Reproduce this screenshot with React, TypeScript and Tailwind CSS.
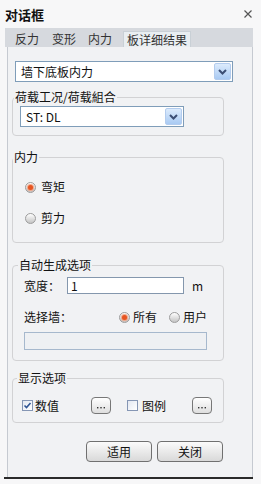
import React from 'react';

const Radio = ({ on }: { on: boolean }) => (
    <span className="w-[11px] h-[11px] rounded-full border border-[#9c9c9c] bg-linear-to-b from-[#ffffff] to-[#c4c4c4] flex items-center justify-center shrink-0">
        {on && <span className="w-[5px] h-[5px] rounded-full bg-[#e65522] shadow-[0_0_1px_1px_#f3a07f]" />}
    </span>
);

const Check = ({ on }: { on: boolean }) => (
    <span className="w-[11px] h-[11px] border border-[#8596b4] bg-linear-to-br from-[#e3e8f1] to-[#ffffff] flex items-center justify-center shrink-0">
        {on && (
            <svg width="9" height="9" viewBox="0 0 9 9">
                <path d="M1.5 4.5 L3.5 6.5 L7.5 2" stroke="#2f5595" strokeWidth="1.6" fill="none" />
            </svg>
        )}
    </span>
);

const DropBtn = () => (
    <span className="w-[17px] h-[17px] mr-[1px] rounded-[2px] border border-[#b3ccee] bg-linear-to-b from-[#dcebfc] to-[#a9caf3] flex items-center justify-center">
        <svg width="9" height="6" viewBox="0 0 9 6">
            <path d="M1 1 L4.5 4.5 L8 1" stroke="#3b4e74" strokeWidth="2" fill="none" />
        </svg>
    </span>
);

// small "..." browse button
const Dots = () => (
    <span className="w-[20px] h-[17px] rounded-[4px] border border-[#777] bg-linear-to-b from-[#ffffff] to-[#dedede] flex items-end justify-center pb-[4px]">
        <svg width="10" height="2" viewBox="0 0 10 2">
            <rect x="1" y="0" width="1.4" height="1.4" fill="#333" />
            <rect x="4.3" y="0" width="1.4" height="1.4" fill="#333" />
            <rect x="7.6" y="0" width="1.4" height="1.4" fill="#333" />
        </svg>
    </span>
);

const App: React.FC = () => {
    return (
        <div className="w-[261px] h-[484px] bg-[#f7f7f8] font-['Noto_Sans_CJK_SC',sans-serif] text-[#111] text-[12px] overflow-hidden">
            <div className="h-[28px] flex items-center justify-between pl-[5px] pr-[9px]">
                <span className="text-[13px] font-bold leading-none">对话框</span>
                <svg width="8" height="8" viewBox="0 0 8 8">
                    <path d="M0.5 0.5 L7.5 7.5 M7.5 0.5 L0.5 7.5" stroke="#555" strokeWidth="1.2" />
                </svg>
            </div>

            <div className="ml-[5px] w-[248px] h-[19px] bg-[#d6d9de] flex items-end pl-[10px] text-[#333] leading-[16px]">
                <span className="h-[16px]">反力</span>
                <span className="h-[16px] ml-[13px]">变形</span>
                <span className="h-[16px] ml-[12px]">内力</span>
                <span className="h-[16px] ml-[11px] px-[3px] bg-[#e9eef1] border-x border-t border-[#c9d0d6]">板详细结果</span>
            </div>

            <div className="ml-[7px] w-[246px] h-[430px] bg-[#f1f2f4] border-x border-[#c6cad1] flex flex-col">
                <div className="ml-[7px] mt-[14px] w-[218px] h-[21px] bg-white border border-[#7f9db9] flex items-center justify-between pl-[5px]">
                    <span className="leading-none">墙下底板内力</span>
                    <DropBtn />
                </div>

                <fieldset className="ml-[4px] mt-[8px] w-[212px] h-[46px] border border-[#d2d2d4] rounded-[4px]">
                    <legend className="ml-[1px] px-[1px] leading-[14px]">荷载工况/荷载組合</legend>
                    <div className="ml-[7px] mt-[2px] w-[164px] h-[21px] bg-white border border-[#7f9db9] flex items-center justify-between pl-[5px]">
                        <span className="leading-none">ST: DL</span>
                        <DropBtn />
                    </div>
                </fieldset>

                <fieldset className="ml-[4px] mt-[14px] w-[212px] h-[93px] border border-[#d2d2d4] rounded-[4px]">
                    <legend className="ml-[0px] px-[1px] leading-[14px]">内力</legend>
                    <div className="ml-[12px] mt-[16px] h-[14px] flex items-center gap-[5px]">
                        <Radio on />
                        <span className="leading-none">弯矩</span>
                    </div>
                    <div className="ml-[12px] mt-[17px] h-[14px] flex items-center gap-[5px]">
                        <Radio on={false} />
                        <span className="leading-none">剪力</span>
                    </div>
                </fieldset>

                <fieldset className="ml-[4px] mt-[15px] w-[212px] h-[103px] border border-[#d2d2d4] rounded-[4px]">
                    <legend className="ml-[5px] px-[1px] leading-[14px]">自动生成选项</legend>
                    <div className="ml-[11px] mt-[5px] h-[17px] flex items-center">
                        <span className="w-[43px] leading-none">宽度：</span>
                        <span className="w-[117px] h-[17px] bg-white border border-[#8497ad] pl-[3px] leading-[15px]">1</span>
                        <span className="ml-[8px] leading-none">m</span>
                    </div>
                    <div className="ml-[11px] mt-[16px] h-[14px] flex items-center">
                        <span className="w-[95px] leading-none">选择墙：</span>
                        <Radio on />
                        <span className="ml-[3px] leading-none">所有</span>
                        <span className="ml-[12px]"><Radio on={false} /></span>
                        <span className="ml-[3px] leading-none">用户</span>
                    </div>
                    <div className="ml-[11px] mt-[8px] w-[183px] h-[18px] bg-[#eef0f3] border border-[#a6b8cd]" />
                </fieldset>

                <fieldset className="ml-[4px] mt-[10px] w-[212px] h-[52px] border border-[#d2d2d4] rounded-[4px]">
                    <legend className="ml-[4px] px-[1px] leading-[14px]">显示选项</legend>
                    <div className="ml-[9px] mt-[12px] h-[17px] flex items-center">
                        <Check on />
                        <span className="ml-[2px] w-[26px] leading-none">数值</span>
                        <span className="ml-[30px]"><Dots /></span>
                        <span className="ml-[16px]"><Check on={false} /></span>
                        <span className="ml-[4px] w-[26px] leading-none">图例</span>
                        <span className="ml-[24px]"><Dots /></span>
                    </div>
                </fieldset>

                <div className="ml-[78px] mt-[18px] flex gap-[5px]">
                    <button className="w-[66px] h-[21px] rounded-[4px] border border-[#707070] bg-linear-to-b from-[#fbfbfb] to-[#d9d9d9] leading-none">适用</button>
                    <button className="w-[66px] h-[21px] rounded-[4px] border border-[#707070] bg-linear-to-b from-[#fbfbfb] to-[#d9d9d9] leading-none">关闭</button>
                </div>
            </div>

            <div className="ml-[4px] w-[249px] h-[2px] bg-[#2a2a2a]" />
        </div>
    );
};

export default App;
